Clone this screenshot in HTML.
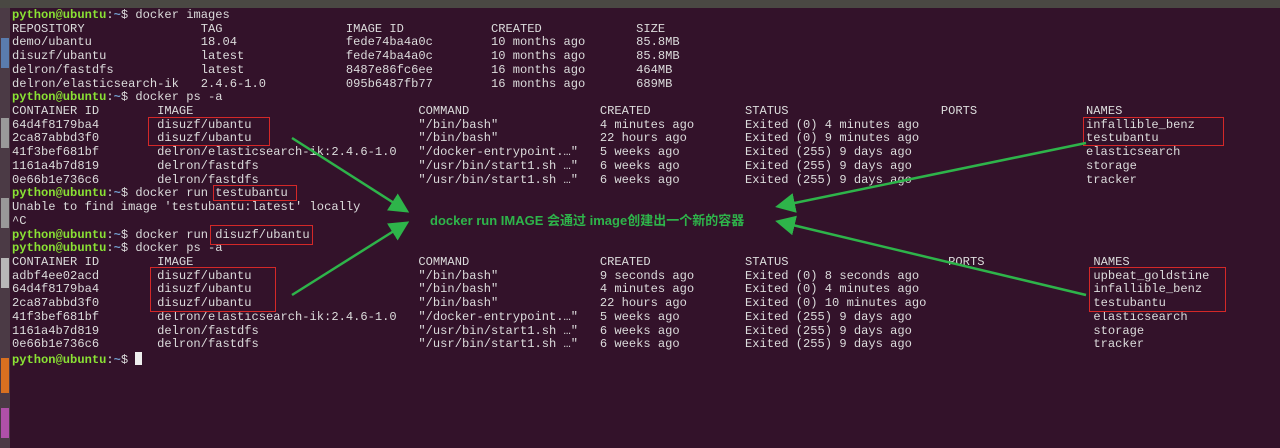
<!DOCTYPE html>
<html><head><meta charset="utf-8"><style>
body{margin:0;width:1280px;height:448px;overflow:hidden;background:#33122a;position:relative}
.top{position:absolute;left:0;top:0;width:1280px;height:8px;background:#4a4843}
.lb{position:absolute;left:0;top:8px;width:10px;height:440px;background:#4b3a45}
.term{position:absolute;left:12px;top:9px;margin:0;font:12.1px/13.72px "Liberation Mono",monospace;color:#dcdcdc;white-space:normal}
.term div{height:13.72px;white-space:pre}
.term span{display:inline-block}
.a{width:20ch}.b2{width:36ch}.c{width:25ch}.d{width:20ch}.e{width:27ch}.e2{width:28ch}.f{width:20ch}
.g{width:26ch}.h{width:20ch}
.p{color:#8ae234;font-weight:bold}.b{color:#729fcf;font-weight:bold}
.r{position:absolute;border:1.5px solid #d42828}
.t{position:absolute;left:430px;top:210px;color:#2eb44a;font:bold 13px "Liberation Sans","Noto Sans CJK SC",sans-serif}
.cur{display:inline-block;width:7px;height:13px;background:#eee;vertical-align:-2px}
</style></head><body>
<div class="top"></div>
<div class="lb">
<div style="position:absolute;top:30px;left:1px;width:8px;height:30px;background:#5a7cae"></div>
<div style="position:absolute;top:110px;left:1px;width:8px;height:30px;background:#9a9a9a"></div>
<div style="position:absolute;top:190px;left:1px;width:8px;height:30px;background:#999"></div>
<div style="position:absolute;top:250px;left:1px;width:8px;height:30px;background:#b8b8b8"></div>
<div style="position:absolute;top:350px;left:1px;width:8px;height:35px;background:#d87020"></div>
<div style="position:absolute;top:400px;left:1px;width:8px;height:30px;background:#b050a8"></div>
</div>
<div class="term"><div><b class="p">python@ubuntu</b>:<b class="b">~</b>$ docker images</div><div><span class="g">REPOSITORY</span><span class="h">TAG</span><span class="f">IMAGE ID</span><span class="f">CREATED</span>SIZE</div><div><span class="g">demo/ubantu</span><span class="h">18.04</span><span class="f">fede74ba4a0c</span><span class="f">10 months ago</span>85.8MB</div><div><span class="g">disuzf/ubantu</span><span class="h">latest</span><span class="f">fede74ba4a0c</span><span class="f">10 months ago</span>85.8MB</div><div><span class="g">delron/fastdfs</span><span class="h">latest</span><span class="f">8487e86fc6ee</span><span class="f">16 months ago</span>464MB</div><div><span class="g">delron/elasticsearch-ik</span><span class="h">2.4.6-1.0</span><span class="f">095b6487fb77</span><span class="f">16 months ago</span>689MB</div><div><b class="p">python@ubuntu</b>:<b class="b">~</b>$ docker ps -a</div><div><span class="a">CONTAINER ID</span><span class="b2">IMAGE</span><span class="c">COMMAND</span><span class="d">CREATED</span><span class="e">STATUS</span><span class="f">PORTS</span>NAMES</div><div><span class="a">64d4f8179ba4</span><span class="b2">disuzf/ubantu</span><span class="c">"/bin/bash"</span><span class="d">4 minutes ago</span><span class="e">Exited (0) 4 minutes ago</span><span class="f"></span>infallible_benz</div><div><span class="a">2ca87abbd3f0</span><span class="b2">disuzf/ubantu</span><span class="c">"/bin/bash"</span><span class="d">22 hours ago</span><span class="e">Exited (0) 9 minutes ago</span><span class="f"></span>testubantu</div><div><span class="a">41f3bef681bf</span><span class="b2">delron/elasticsearch-ik:2.4.6-1.0</span><span class="c">"/docker-entrypoint.…"</span><span class="d">5 weeks ago</span><span class="e">Exited (255) 9 days ago</span><span class="f"></span>elasticsearch</div><div><span class="a">1161a4b7d819</span><span class="b2">delron/fastdfs</span><span class="c">"/usr/bin/start1.sh …"</span><span class="d">6 weeks ago</span><span class="e">Exited (255) 9 days ago</span><span class="f"></span>storage</div><div><span class="a">0e66b1e736c6</span><span class="b2">delron/fastdfs</span><span class="c">"/usr/bin/start1.sh …"</span><span class="d">6 weeks ago</span><span class="e">Exited (255) 9 days ago</span><span class="f"></span>tracker</div><div><b class="p">python@ubuntu</b>:<b class="b">~</b>$ docker run testubantu</div><div>Unable to find image 'testubantu:latest' locally</div><div>^C</div><div><b class="p">python@ubuntu</b>:<b class="b">~</b>$ docker run disuzf/ubantu</div><div><b class="p">python@ubuntu</b>:<b class="b">~</b>$ docker ps -a</div><div><span class="a">CONTAINER ID</span><span class="b2">IMAGE</span><span class="c">COMMAND</span><span class="d">CREATED</span><span class="e2">STATUS</span><span class="f">PORTS</span>NAMES</div><div><span class="a">adbf4ee02acd</span><span class="b2">disuzf/ubantu</span><span class="c">"/bin/bash"</span><span class="d">9 seconds ago</span><span class="e2">Exited (0) 8 seconds ago</span><span class="f"></span>upbeat_goldstine</div><div><span class="a">64d4f8179ba4</span><span class="b2">disuzf/ubantu</span><span class="c">"/bin/bash"</span><span class="d">4 minutes ago</span><span class="e2">Exited (0) 4 minutes ago</span><span class="f"></span>infallible_benz</div><div><span class="a">2ca87abbd3f0</span><span class="b2">disuzf/ubantu</span><span class="c">"/bin/bash"</span><span class="d">22 hours ago</span><span class="e2">Exited (0) 10 minutes ago</span><span class="f"></span>testubantu</div><div><span class="a">41f3bef681bf</span><span class="b2">delron/elasticsearch-ik:2.4.6-1.0</span><span class="c">"/docker-entrypoint.…"</span><span class="d">5 weeks ago</span><span class="e2">Exited (255) 9 days ago</span><span class="f"></span>elasticsearch</div><div><span class="a">1161a4b7d819</span><span class="b2">delron/fastdfs</span><span class="c">"/usr/bin/start1.sh …"</span><span class="d">6 weeks ago</span><span class="e2">Exited (255) 9 days ago</span><span class="f"></span>storage</div><div><span class="a">0e66b1e736c6</span><span class="b2">delron/fastdfs</span><span class="c">"/usr/bin/start1.sh …"</span><span class="d">6 weeks ago</span><span class="e2">Exited (255) 9 days ago</span><span class="f"></span>tracker</div><div><b class="p">python@ubuntu</b>:<b class="b">~</b>$ <i class="cur"></i></div></div>
<div class="r" style="left:148px;top:117px;width:120px;height:27px"></div>
<div class="r" style="left:1083px;top:117px;width:139px;height:27px"></div>
<div class="r" style="left:213px;top:185px;width:82px;height:14px"></div>
<div class="r" style="left:210px;top:225px;width:101px;height:18px"></div>
<div class="r" style="left:150px;top:267px;width:124px;height:43px"></div>
<div class="r" style="left:1089px;top:267px;width:135px;height:43px"></div>
<svg width="1280" height="448" style="position:absolute;left:0;top:0">
<defs><marker id="a" markerWidth="8" markerHeight="8" refX="6" refY="4" orient="auto" markerUnits="strokeWidth"><path d="M0,0 L8,4 L0,8 Z" fill="#2eb44a"/></marker></defs>
<g stroke="#2eb44a" stroke-width="2.5" marker-end="url(#a)">
<line x1="292" y1="138" x2="405" y2="210"/>
<line x1="292" y1="295" x2="405" y2="224"/>
<line x1="1086" y1="143" x2="780" y2="206"/>
<line x1="1086" y1="295" x2="780" y2="222"/>
</g></svg>
<div class="t">docker run IMAGE 会通过 image创建出一个新的容器</div>
</body></html>
